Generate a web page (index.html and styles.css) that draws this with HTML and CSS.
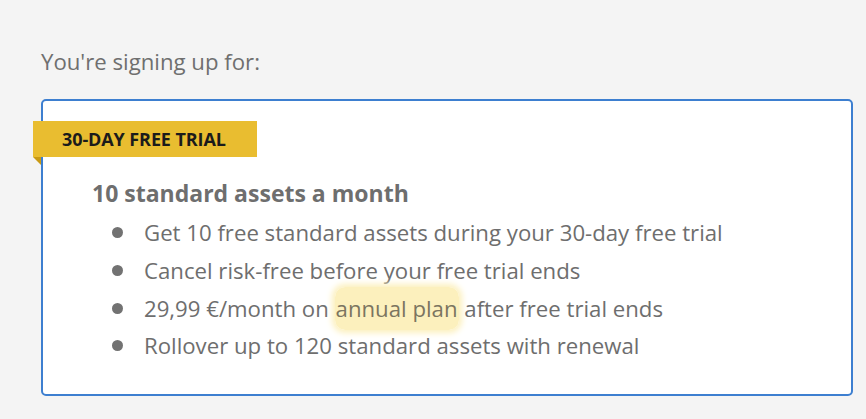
FILE: index.html
```html
<!DOCTYPE html>
<html>
<head>
<meta charset="utf-8">
<link rel="stylesheet" href="styles.css">
</head>
<body>
<div class="page">
  <h2 class="lead">You're signing up for:</h2>
  <div class="card">
    <div class="badge"><span>30-DAY FREE TRIAL</span></div>
    <div class="content">
      <h3 class="title">10 standard assets a month</h3>
      <ul class="list">
        <li>Get 10 free standard assets during your 30-day free trial</li>
        <li>Cancel risk-free before your free trial ends</li>
        <li>29,99 €/month on <span class="hl">annual plan</span> after free trial ends</li>
        <li>Rollover up to 120 standard assets with renewal</li>
      </ul>
    </div>
  </div>
</div>
</body>
</html>
```
FILE: styles.css
```css
html, body {
  margin: 0;
  padding: 0;
  background: #f4f4f4;
}
body {
  font-family: "Open Sans", "Noto Sans", sans-serif;
  color: #6e6e6e;
  width: 866px;
  height: 419px;
  overflow: hidden;
}
.page {
  padding: 46px 13px 0 41px;
}
.lead {
  margin: 0;
  font-size: 22.2px;
  font-weight: 400;
  line-height: 32px;
  color: #6f6f6f;
}
.card {
  margin-top: 21px;
  height: 297px;
  box-sizing: border-box;
  background: #fff;
  border: 2px solid #3d7fd0;
  border-radius: 5px;
  position: relative;
  padding-top: 20px;
}
.badge {
  margin-left: -10px;
  width: 224px;
  height: 36px;
  background: #e9bd30;
  position: relative;
  display: flex;
  align-items: center;
  padding-left: 29px;
  box-sizing: border-box;
}
.badge::after {
  content: "";
  position: absolute;
  left: 0;
  top: 36px;
  border-top: 8px solid #c99a14;
  border-left: 8px solid transparent;
}
.badge span {
  font-size: 18px;
  font-weight: 700;
  color: #1b1b1b;
  letter-spacing: -0.1px;
}
.content {
  padding-left: 49px;
}
.title {
  margin: 20px 0 0;
  font-size: 23px;
  font-weight: 700;
  line-height: 32px;
  color: #6e6e6e;
}
.list {
  margin: 5px 0 0;
  padding: 0 0 0 52px;
  font-size: 22.2px;
  line-height: 37.8px;
}
.list li {
  list-style: none;
  position: relative;
}
.list li::before {
  content: "";
  position: absolute;
  left: -32px;
  top: 13px;
  width: 11px;
  height: 11px;
  border-radius: 50%;
  background: #727272;
}
.hl {
  background: #fcf0bd;
  border-radius: 10px;
  box-shadow: 0 0 6px 3px #fcf0bd;
  padding: 6px 1px;
  color: #7b7560;
}
```
